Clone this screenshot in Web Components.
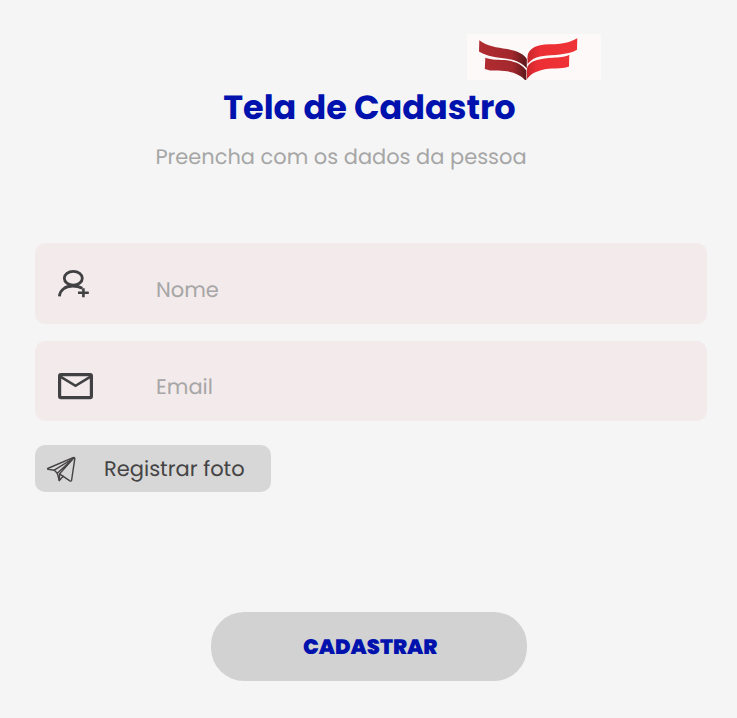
<!DOCTYPE html>
<html lang="pt-BR">
<head>
<meta charset="utf-8">
<title>Tela de Cadastro</title>
<style>
html,body{margin:0;height:100%;background:#f5f5f5}
body{font-family:Poppins,Inter,"Open Sans",sans-serif;overflow:hidden;text-rendering:geometricPrecision}
</style>
</head>
<body>
<signup-screen></signup-screen>
<script>
const define = (name, html) => {
  const t = document.createElement('template');
  t.innerHTML = html;
  customElements.define(name, class extends HTMLElement {
    constructor() {
      super();
      this.attachShadow({mode: 'open'}).appendChild(t.content.cloneNode(true));
    }
  });
};

define('brand-logo', `<style>:host{display:block;width:134px;height:46px;background:#fdf9f9}svg{display:block}</style>
<svg width="134" height="46" viewBox="0 0 134 46">
<defs>
<linearGradient id="l" x1="0" x2="1"><stop offset="0" stop-color="#b02c30"/><stop offset=".68" stop-color="#a2282d"/><stop offset="1" stop-color="#5c181c"/></linearGradient>
<linearGradient id="r" x1="0" x2="1"><stop offset="0" stop-color="#c9272d"/><stop offset=".25" stop-color="#ec2f34"/><stop offset="1" stop-color="#ee3236"/></linearGradient>
</defs>
<path fill="url(#l)" d="M12.300 6.300C20 12.500 30 13.500 40 15C50 16.500 57 20 59.800 25V34.500C56 29.500 49 26 40 24.800C30 23.600 20 22.500 12 17.500Z"/>
<path fill="url(#l)" d="M18.300 23.700C25 26.200 32 25.400 40 26.300C49 27.500 56 31 59.300 36.500V46H58C54 41.500 48 38.500 40 37.300C32 36.200 25 37.800 17.800 35Z"/>
<path fill="url(#r)" d="M110.300 4.300C105 7.500 99 9 93 9.700C86 10.500 79 10 73 11.200C66 12.500 60.500 17 60.500 23V30C64 25.800 68 23.800 73 22.600C80 20.800 87 21.200 93 20.400C99 19.600 105 19 110 15.800Z"/>
<path fill="url(#r)" d="M102.300 20.700C97 23.400 92 23.200 86 23.700C80 24.200 75 24.600 70 26C64 27.500 60 31 59.800 36V45.500C63 40.500 68 37.700 74 36.200C84 33.500 94 35.700 102 32.600Z"/>
</svg>`);

define('screen-title', `<style>:host{display:block}h1{margin:0;font-size:33.500px;line-height:40px;font-weight:700;color:#0012ae;white-space:nowrap}</style><h1><slot></slot></h1>`);
define('screen-hint', `<style>:host{display:block}p{margin:0;font-size:20.940px;line-height:28px;color:#a6a6a6;white-space:nowrap}</style><p><slot></slot></p>`);

define('form-field', `<style>
:host{display:flex;box-sizing:border-box;height:80.500px;border-radius:10px;background:#f3eaeb;padding-left:22px}
.icon{width:99px;flex:none}
.label{padding-top:33.500px;font-size:21px;line-height:28px;color:#a6a6a6}
</style><div class="icon"><slot name="icon"></slot></div><div class="label"><slot></slot></div>`);

define('user-add-icon', `<style>:host{display:block;padding-top:26px}svg{display:block}</style>
<svg width="34" height="30" viewBox="0 0 34 30" fill="none" stroke="#414042" stroke-width="2.800">
<ellipse cx="16.300" cy="9.300" rx="9" ry="6.900"/>
<path d="M2.400 27.300C2.800 21.500 8 17 15.500 17C19.500 17 23 18 25.300 19.300"/>
<path stroke-width="2.600" d="M26.400 19.300V28.200M21 23.700H31.800"/></svg>`);

define('mail-icon', `<style>:host{display:block;padding-top:31px}svg{display:block}</style>
<svg width="37" height="29" viewBox="0 0 37 29" fill="none" stroke="#414042" stroke-width="3.200">
<rect x="2.600" y="2.600" width="31.800" height="23" rx="1.300"/>
<path stroke-width="2.600" d="M3 4.400L18.500 13.800L34 4.400"/></svg>`);

define('plane-icon', `<style>:host{display:block;padding-top:3px}svg{display:block}</style>
<svg width="32" height="28" viewBox="0 0 32 28" fill="none" stroke="#454344" stroke-width="1.400" stroke-linejoin="round" stroke-linecap="round">
<path d="M1.700 12.500L27 1.700Q28.900 1.100 28.800 2.600L25.600 24.200Q25.200 25.600 23.900 24.900L17.200 20.300L13.300 24.500L11.300 17.200L8.300 14.200L2.200 13.400Q1.200 13 1.700 12.500Z"/>
<path d="M8.300 14.200L27.800 2L11.300 17.200M13.300 24.500L13.600 17.900L27.800 2M13.600 17.900L17.200 20.300"/></svg>`);

define('photo-button', `<style>:host{display:block}
button{all:unset;box-sizing:border-box;display:flex;align-items:center;width:236px;height:47px;border-radius:10px;background:#d7d7d7;padding-left:11px;font-size:21px;line-height:28px;color:#454344;white-space:nowrap}
.label{padding:3px 0 0 26px}</style><button><plane-icon></plane-icon><span class="label"><slot></slot></span></button>`);

define('submit-button', `<style>:host{display:block}
button{all:unset;box-sizing:border-box;display:flex;align-items:center;justify-content:center;width:315.500px;height:69px;padding:2px 0 0 2px;border-radius:33px;background:#d2d2d2;font-size:21px;line-height:28px;font-weight:900;color:#0012ae;white-space:nowrap}</style><button><slot></slot></button>`);

define('signup-screen', `<style>
:host{display:flex;flex-direction:column;box-sizing:border-box;width:737px;height:718px;padding:34px 30px 0 35px;background:#f5f5f5}
brand-logo{margin-left:432px}
screen-title{margin:8px 0 0 188.300px}
screen-hint{margin:16px 0 0 120.400px}
.fields{display:flex;flex-direction:column;gap:17px;margin-top:71px}
photo-button{margin-top:24.200px}
submit-button{margin:120px 0 0 176.400px}
</style>
<brand-logo></brand-logo>
<screen-title>Tela de Cadastro</screen-title>
<screen-hint>Preencha com os dados da pessoa</screen-hint>
<div class="fields">
<form-field><user-add-icon slot="icon"></user-add-icon>Nome</form-field>
<form-field><mail-icon slot="icon"></mail-icon>Email</form-field>
</div>
<photo-button>Registrar foto</photo-button>
<submit-button>CADASTRAR</submit-button>`);
</script>
</body>
</html>
